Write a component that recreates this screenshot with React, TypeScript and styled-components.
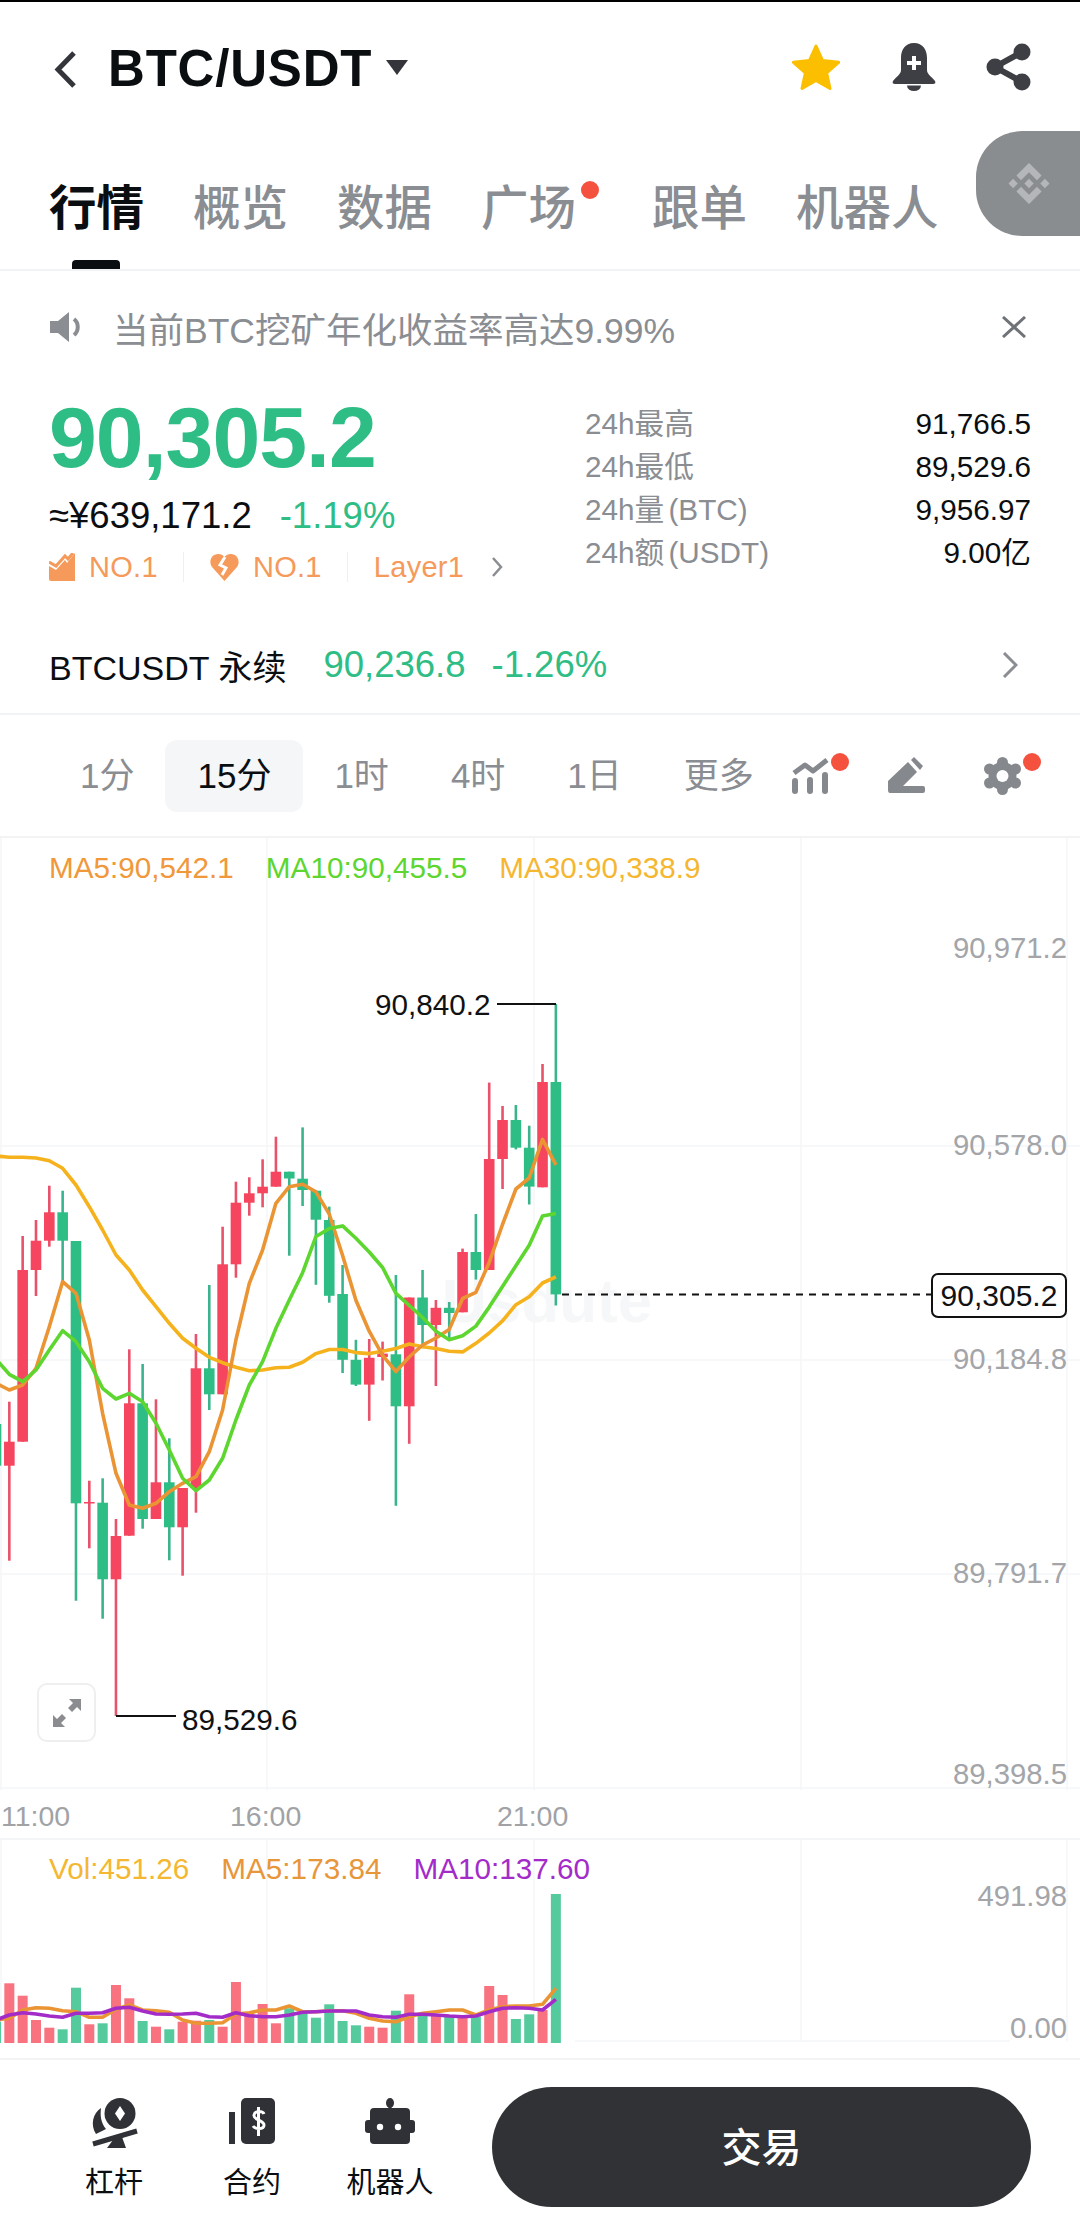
import styled, { createGlobalStyle } from 'styled-components';

const GRAY = '#8a8d92';
const RED = '#f5455f';
const GREEN = '#2ebd85';
const DOT = '#f4513f';

const GlobalStyle = createGlobalStyle`
  html, body {
    margin: 0;
    padding: 0;
    background: #fff;
  }
  body {
    font-family: 'Liberation Sans', 'Noto Sans CJK SC', sans-serif;
    color: #0b0e11;
  }
`;

// k, colour, high, body top, body bottom, low
type Candle = [number, 'r' | 'g', number, number, number, number];
const candles: Candle[] = [
  [-1, 'g', 1400, 1424, 1465.7, 1480],
  [0, 'r', 1401.7, 1441.7, 1465.7, 1560.7],
  [1, 'r', 1236, 1270, 1441.7, 1441.7],
  [2, 'r', 1220, 1240.7, 1270, 1296],
  [3, 'r', 1185.7, 1212.3, 1240.7, 1246.7],
  [4, 'g', 1190.7, 1212.3, 1240.7, 1281.7],
  [5, 'g', 1241, 1241, 1503.3, 1600.7],
  [6, 'r', 1480.7, 1502, 1503.5, 1548.3],
  [7, 'g', 1478.3, 1502.7, 1579.3, 1618.7],
  [8, 'r', 1519, 1536, 1579.3, 1716],
  [9, 'r', 1349.3, 1403.3, 1535.7, 1535.7],
  [10, 'g', 1364, 1403.3, 1519, 1528.7],
  [11, 'r', 1399.3, 1482.3, 1519, 1519],
  [12, 'g', 1438.3, 1482.3, 1527.3, 1560.3],
  [13, 'r', 1488, 1488, 1527.3, 1575.7],
  [14, 'r', 1334, 1368.3, 1488, 1512.7],
  [15, 'g', 1285, 1368.3, 1394.3, 1410],
  [16, 'r', 1226.7, 1264.3, 1394.3, 1394.3],
  [17, 'r', 1181.7, 1202.7, 1264.3, 1277.7],
  [18, 'r', 1177.3, 1193.3, 1202.7, 1215.7],
  [19, 'r', 1159.3, 1186.7, 1193.3, 1207.3],
  [20, 'r', 1136.7, 1171.7, 1186.7, 1186.7],
  [21, 'g', 1171.7, 1171.7, 1178.5, 1255.7],
  [22, 'g', 1127.4, 1178.7, 1190, 1206],
  [23, 'g', 1190.7, 1190.7, 1219.7, 1284.8],
  [24, 'g', 1206.6, 1220, 1295.8, 1302.7],
  [25, 'g', 1265, 1294, 1359.8, 1373],
  [26, 'g', 1339.8, 1359.8, 1384.6, 1386],
  [27, 'r', 1339, 1357.8, 1384.6, 1420.8],
  [28, 'r', 1341.6, 1353.6, 1357, 1380.5],
  [29, 'g', 1275, 1354.3, 1406.3, 1505.8],
  [30, 'r', 1297.5, 1297.5, 1406.3, 1443.8],
  [31, 'g', 1270, 1297.5, 1325, 1345],
  [32, 'r', 1300, 1307.8, 1325, 1386],
  [33, 'g', 1302, 1307.8, 1313, 1338],
  [34, 'r', 1248.6, 1252, 1312.3, 1312.3],
  [35, 'g', 1214, 1252, 1270, 1279.6],
  [36, 'r', 1082.6, 1159, 1270, 1270],
  [37, 'r', 1106, 1120, 1159, 1189],
  [38, 'g', 1105, 1120, 1147.7, 1149.4],
  [39, 'g', 1125.7, 1147.7, 1186.6, 1204.5],
  [40, 'r', 1064, 1082, 1187.3, 1187.3],
  [41, 'g', 1004, 1082, 1294.4, 1305.4],
];

const ma5 = [1383.3, 1390, 1385, 1368.3, 1326.7, 1281.7, 1293.3, 1340, 1413.3, 1473.3, 1505, 1508.3, 1503.3, 1491.7, 1483.3, 1476.7, 1451.7, 1410, 1340, 1283.3, 1250, 1203.3, 1186.7, 1184.2, 1191.8, 1214.2, 1255.5, 1300.2, 1331.2, 1355.3, 1371.5, 1357, 1345, 1338.1, 1329.5, 1298.5, 1292.3, 1262.4, 1224.5, 1189, 1178, 1139.4, 1164.9];
const ma10 = [1359.3, 1374.3, 1381.7, 1370, 1350, 1330.7, 1341.7, 1361.7, 1388.3, 1399, 1393.3, 1401.7, 1423.3, 1450, 1478.3, 1490.7, 1480, 1458.3, 1420, 1385, 1361.7, 1328.3, 1300, 1272.7, 1236.5, 1228.6, 1225.9, 1238.3, 1252, 1267.5, 1293.4, 1305.4, 1317.5, 1331.2, 1339.8, 1335.7, 1326.1, 1307.1, 1286.5, 1265.8, 1245.2, 1215.9, 1213.5];
const ma30 = [1156, 1157.3, 1157.3, 1158, 1160.7, 1168.3, 1185, 1206.7, 1230, 1255, 1270, 1290, 1306.7, 1323.3, 1338.3, 1348.3, 1357.3, 1362.7, 1367.3, 1370.7, 1370, 1367.7, 1367.2, 1362.2, 1353.6, 1349.5, 1349.5, 1352.6, 1353.6, 1351.2, 1348.5, 1344, 1346.7, 1348.5, 1351.2, 1351.9, 1343.3, 1333, 1320.9, 1304.7, 1296.8, 1283, 1276.8];

// volume bar tops, from k = -1
const volTops = [2021.7, 1983.3, 1995.7, 2020, 2027.7, 2029.3, 1987.7, 2024.3, 2023.3, 1985, 1998.3, 2021, 2026.7, 2029.3, 2021.7, 2020.7, 2020, 2026.7, 1982, 2013.3, 2004, 2023.3, 2008.3, 2013.3, 2017.7, 2004.3, 2021, 2025.3, 2026.7, 2027.7, 2010.7, 1994.3, 2015, 2015, 2016.7, 2016.7, 2016.7, 1986, 1995, 2019, 2014.3, 2010, 1894];
const volMa5 = [180, 175, 150, 143, 145, 152, 155, 172, 172, 148, 135, 150, 152, 157, 180, 190, 190, 188, 162, 158, 150, 150, 138, 155, 155, 152, 152, 160, 175, 183, 185, 170, 160, 155, 150, 150, 165, 150, 140, 138, 138, 133, 85];
const volMa10 = [180, 165, 158, 162, 168, 172, 160, 160, 158, 145, 142, 153, 162, 163, 162, 160, 170, 172, 158, 167, 170, 170, 165, 157, 155, 153, 153, 153, 165, 170, 172, 163, 163, 165, 168, 170, 168, 155, 145, 143, 145, 150, 118];

const xOf = (k: number) => 9.33 + k * 13.33;
const linePoints = (ys: number[]) =>
  ys.map((y, i) => `${xOf(i - 1).toFixed(1)},${y}`).join(' ');
const volPoints = (vs: number[]) =>
  vs.map((v, i) => `${xOf(i - 1).toFixed(1)},${(1960 + v / 3).toFixed(1)}`).join(' ');

const tabs = ['行情', '概览', '数据', '广场', '跟单', '机器人'];
const intervals = ['1分', '15分', '1时', '4时', '1日', '更多'];
const stats = [
  ['24h最高', '91,766.5'],
  ['24h最低', '89,529.6'],
  ['24h量 (BTC)', '9,956.97'],
  ['24h额 (USDT)', '9.00亿'],
];
const axisLabels: [number, string][] = [
  [950, '90,971.2'],
  [1147, '90,578.0'],
  [1361, '90,184.8'],
  [1575, '89,791.7'],
  [1776, '89,398.5'],
];

const App = () => {
  return (
    <Page>
      <GlobalStyle />
      <TopLine />
      <Header>
        <TitleGroup>
          <svg width="23" height="39" viewBox="0 0 23 39">
            <path d="M20 3L4 19.5 20 36" fill="none" stroke="#33353a" strokeWidth="5" />
          </svg>
          <Title>BTC/USDT</Title>
          <svg width="22" height="15" viewBox="0 0 22 15">
            <path d="M0 0h22L11 15z" fill="#33353a" />
          </svg>
        </TitleGroup>
        <HeaderIcons>
          <svg width="52" height="48" viewBox="0 0 52 48">
            <path
              d="M26 3l6.6 14.6 16 1.7-12 10.600 3.400 15.600L26 37.400l-14 8.100 3.400-15.600-12-10.600 16-1.700z"
              fill="#fcbf00"
              stroke="#fcbf00"
              strokeWidth="3"
              strokeLinejoin="round"
            />
          </svg>
          <svg width="46" height="48" viewBox="0 0 46 48">
            <path
              d="M23 0C14 0 10 7 10 15v12c0 4-4 6-8 11-1 2 0 3 2 3h38c2 0 3-1 2-3-4-5-8-7-8-11V15C36 7 32 0 23 0z"
              fill="#3d3f44"
            />
            <path d="M16 42.500a7 5.500 0 0 0 14 0z" fill="#3d3f44" />
            <path d="M21 13h4v5h5v4h-5v5h-4v-5h-5v-4h5z" fill="#fff" />
          </svg>
          <svg width="46" height="48" viewBox="0 0 46 48">
            <path d="M36 9L9 24l27 15" fill="none" stroke="#3d3f44" strokeWidth="6" />
            <circle cx="36" cy="9" r="8.500" fill="#3d3f44" />
            <circle cx="9" cy="24" r="8.500" fill="#3d3f44" />
            <circle cx="36" cy="39" r="8.500" fill="#3d3f44" />
          </svg>
        </HeaderIcons>
      </Header>

      <TabsRow>
        {tabs.map((t, i) => (
          <Tab key={t} $active={i === 0} $dot={t === '广场'}>
            {t}
          </Tab>
        ))}
        <FloatingTab>
          <svg width="42" height="41" viewBox="0 0 126.61 126.61">
            <path
              d="M38.73 53.2l24.59-24.58 24.6 24.6 14.3-14.31L63.32 0 24.42 38.9 38.73 53.2zM0 63.31l14.3-14.31 14.31 14.31-14.31 14.3zM38.73 73.41L63.32 98l24.6-24.6 14.31 14.29L63.32 126.61 24.41 87.7l-.02-.02zM98 63.31l14.3-14.31 14.31 14.3-14.31 14.32zM77.83 63.3L63.32 48.78 52.59 59.51l-1.24 1.23-2.54 2.54 14.51 14.5 14.51-14.47z"
              fill="#b4b6b9"
            />
          </svg>
        </FloatingTab>
      </TabsRow>

      <Notice>
        <NoticeText>
          <svg width="36" height="32" viewBox="0 0 36 32">
            <path d="M0 10h8L19 1v30L8 22H0z" fill={GRAY} />
            <path d="M24 8c5 4 5 12 0 16" fill="none" stroke={GRAY} strokeWidth="4" />
          </svg>
          当前BTC挖矿年化收益率高达9.99%
        </NoticeText>
        <svg width="24" height="22" viewBox="0 0 24 22">
          <path d="M1 1l22 20M23 1L1 21" stroke="#6f7378" strokeWidth="3" />
        </svg>
      </Notice>

      <Quote>
        <QuoteLeft>
          <BigPrice>90,305.2</BigPrice>
          <SubPrice>
            <span>≈¥639,171.2</span>
            <GreenText>-1.19%</GreenText>
          </SubPrice>
          <TagRow>
            <Tag>
              <svg width="26" height="28" viewBox="0 0 26 28">
                <path d="M0 13l7 4 9-10 2 3 8-10v28H2q-2 0-2-2z" fill="#f59a5a" />
                <path d="M0 9l7 4 9-10 3 3 5-6" fill="none" stroke="#f59a5a" strokeWidth="3" />
              </svg>
              NO.1
            </Tag>
            <Tag $divided>
              <svg width="29" height="29" viewBox="0 0 29 29">
                <path
                  d="M14.500 28L2 14C-2 8 2 1 8 1c3 0 5 1 6.500 3C16 2 18 1 21 1c6 0 10 7 6 13z"
                  fill="#f59a5a"
                />
                <path d="M15 4l-5 8 6 3-4 7" fill="none" stroke="#fff" strokeWidth="3" />
              </svg>
              NO.1
            </Tag>
            <Tag $divided>
              Layer1
              <TagChevron width="12" height="20" viewBox="0 0 12 20">
                <path d="M2 1l8 9-8 9" fill="none" stroke={GRAY} strokeWidth="2.500" />
              </TagChevron>
            </Tag>
          </TagRow>
        </QuoteLeft>
        <StatList>
          {stats.map(([label, value]) => (
            <StatRow key={label}>
              <StatLabel>{label}</StatLabel>
              <StatValue>{value}</StatValue>
            </StatRow>
          ))}
        </StatList>
      </Quote>

      <ContractRow>
        <ContractInfo>
          <ContractName>BTCUSDT 永续</ContractName>
          <GreenText>90,236.8</GreenText>
          <GreenText>-1.26%</GreenText>
        </ContractInfo>
        <svg width="16" height="26" viewBox="0 0 16 26">
          <path d="M2 1l12 12L2 25" fill="none" stroke={GRAY} strokeWidth="3" />
        </svg>
      </ContractRow>

      <IntervalRow>
        {intervals.map((t) => (
          <Interval key={t} $active={t === '15分'}>
            {t}
          </Interval>
        ))}
        <ToolIcons>
          <ToolIcon $dot>
            <svg width="37" height="37" viewBox="0 0 37 37">
              <path d="M2 16l11-8 8 6L35 3" fill="none" stroke="#85888d" strokeWidth="5" strokeLinejoin="round" />
              <path d="M3 24v10M18 23v11M33 18v16" stroke="#85888d" strokeWidth="6" strokeLinecap="round" />
            </svg>
          </ToolIcon>
          <ToolIcon>
            <svg width="37" height="36" viewBox="0 0 37 36">
              <path d="M0 33V24L20 5l9 10-14 14h20q2 0 2 2v3q0 2-2 2H2q-2 0-2-3z" fill="#85888d" />
              <path d="M23 3l3-3 9 9-3 4z" fill="#85888d" />
            </svg>
          </ToolIcon>
          <ToolIcon $dot>
            <svg width="37" height="38" viewBox="0 0 37 38">
              <circle cx="18.500" cy="19" r="14" fill="#85888d" />
              <circle cx="18.500" cy="5.500" r="5.500" fill="#85888d" />
              <circle cx="18.500" cy="32.500" r="5.500" fill="#85888d" />
              <circle cx="5.500" cy="12" r="5.500" fill="#85888d" />
              <circle cx="31.500" cy="12" r="5.500" fill="#85888d" />
              <circle cx="5.500" cy="26" r="5.500" fill="#85888d" />
              <circle cx="31.500" cy="26" r="5.500" fill="#85888d" />
              <circle cx="18.500" cy="19" r="6" fill="#fff" />
            </svg>
          </ToolIcon>
        </ToolIcons>
      </IntervalRow>

      <ChartPane>
        <svg width="1080" height="1000" viewBox="0 838 1080 1000">
          {[1, 267, 534, 801, 1067].map((x) => (
            <GridLine key={x} x1={x} x2={x} y1="838" y2="1790" />
          ))}
          {[1146, 1360, 1574, 1788].map((y) => (
            <GridLine key={y} x1="0" x2="1080" y1={y} y2={y} />
          ))}
          <Watermark x="442" y="1322">
            Usdute
          </Watermark>
          {candles.map(([k, c, high, top, bottom, low]) => (
            <g key={k}>
              <Wick x1={xOf(k)} x2={xOf(k)} y1={high} y2={low} $up={c === 'r'} />
              <Body x={xOf(k) - 5.3} y={top} width="10.600" height={bottom - top} $up={c === 'r'} />
            </g>
          ))}
          <MaLine points={linePoints(ma30)} stroke="#f5b21c" />
          <MaLine points={linePoints(ma5)} stroke="#ea9434" />
          <MaLine points={linePoints(ma10)} stroke="#5dd62f" />
          <Leader points="497,1004 556,1004" />
          <Leader points="116,1716 176,1716" />
          <ExtremeLabel x="375" y="1007">
            90,840.2
          </ExtremeLabel>
          <ExtremeLabel x="182" y="1722">
            89,529.6
          </ExtremeLabel>
          <line x1="562" x2="931" y1="1294.500" y2="1294.500" stroke="#111" strokeWidth="2" strokeDasharray="7 6" />
          {axisLabels.map(([y, label]) => (
            <AxisLabel key={label} x="1067" y={y}>
              {label}
            </AxisLabel>
          ))}
          <TimeLabel x="1" y="1818">
            11:00
          </TimeLabel>
          <TimeLabel x="230" y="1818">
            16:00
          </TimeLabel>
          <TimeLabel x="497" y="1818">
            21:00
          </TimeLabel>
        </svg>
        <Legend>
          <LegendItem $color="#f0983a">MA5:90,542.1</LegendItem>
          <LegendItem $color="#5dd62f">MA10:90,455.5</LegendItem>
          <LegendItem $color="#f5b731">MA30:90,338.9</LegendItem>
        </Legend>
        <PriceTag>90,305.2</PriceTag>
        <ExpandButton>
          <svg width="30" height="30" viewBox="0 0 30 30">
            <path d="M17 1h12v12l-4-4-5 5-4-4 5-5zM13 29H1V17l4 4 5-5 4 4-5 5z" fill="#8a8c90" />
          </svg>
        </ExpandButton>
      </ChartPane>

      <VolumePane>
        <svg width="1080" height="218" viewBox="0 1840 1080 218">
          {[1, 267, 534, 801, 1067].map((x) => (
            <GridLine key={x} x1={x} x2={x} y1="1840" y2="2041" />
          ))}
          <GridLine x1="575" x2="1010" y1="2041" y2="2041" />
          {volTops.map((top, i) => (
            <VolBar
              key={i}
              x={xOf(i - 1) - 5}
              y={top}
              width="10"
              height={2043 - top}
              $up={candles[i][1] === 'r'}
            />
          ))}
          <VolLine points={volPoints(volMa5)} stroke="#ea9434" />
          <VolLine points={volPoints(volMa10)} stroke="#a32cc9" />
          <AxisLabel x="1067" y="1898">
            491.98
          </AxisLabel>
          <AxisLabel x="1067" y="2030">
            0.00
          </AxisLabel>
        </svg>
        <Legend $top={12}>
          <LegendItem $color="#f4b731">Vol:451.26</LegendItem>
          <LegendItem $color="#e8963a">MA5:173.84</LegendItem>
          <LegendItem $color="#a32cc9">MA10:137.60</LegendItem>
        </Legend>
      </VolumePane>

      <BottomBar>
        <BottomTool>
          <ToolGlyph>
            <svg width="48" height="50" viewBox="0 0 48 50">
              <circle cx="30" cy="15.500" r="15.500" fill="#2f3136" />
              <path d="M30 8l5 7.500-5 7.500-5-7.500z" fill="#fff" />
              <path d="M11 10C3 15 0 27 6 36l10-5c-5-6-6-13-5-21z" fill="#2f3136" />
              <path d="M3 46l44-13" stroke="#2f3136" strokeWidth="5" />
              <path d="M23 42l9-3 4 11H17z" fill="#2f3136" />
            </svg>
          </ToolGlyph>
          杠杆
        </BottomTool>
        <BottomTool>
          <ToolGlyph>
            <svg width="46" height="46" viewBox="0 0 46 46">
              <rect x="12" y="0" width="34" height="46" rx="5" fill="#2f3136" />
              <rect x="0" y="14" width="6" height="32" fill="#2f3136" />
              <path
                d="M35 16c-1-3-9-4-10 1s10 5 10 10-9 4-11 1M29.500 9v29"
                fill="none"
                stroke="#fff"
                strokeWidth="3"
              />
            </svg>
          </ToolGlyph>
          合约
        </BottomTool>
        <BottomTool>
          <ToolGlyph>
            <svg width="50" height="46" viewBox="0 0 50 46">
              <ellipse cx="25" cy="5" rx="4" ry="5" fill="#2f3136" />
              <rect x="23.500" y="6" width="3" height="6" fill="#2f3136" />
              <rect x="5" y="10" width="40" height="36" rx="4" fill="#2f3136" />
              <rect x="0" y="22" width="50" height="13" rx="3" fill="#2f3136" />
              <circle cx="15" cy="29" r="3.200" fill="#fff" />
              <circle cx="33" cy="29" r="3.200" fill="#fff" />
            </svg>
          </ToolGlyph>
          机器人
        </BottomTool>
        <TradeButton>交易</TradeButton>
      </BottomBar>
    </Page>
  );
};

const Page = styled.div`
  width: 1080px;
  height: 2237px;
  overflow: hidden;
  background: #fff;
`;
const TopLine = styled.div`
  height: 2px;
  background: #000;
`;
const Header = styled.header`
  height: 134px;
  display: flex;
  align-items: center;
  justify-content: space-between;
  padding: 0 48px 0 54px;
`;
const TitleGroup = styled.div`
  display: flex;
  align-items: center;
  gap: 14px;
  & > svg:last-child {
    margin-top: -4px;
  }
`;
const Title = styled.h1`
  margin: 0 0 0 17px;
  font-size: 51px;
  line-height: 60px;
  font-weight: 700;
  color: #0b0e11;
  letter-spacing: 0.8px;
`;
const HeaderIcons = styled.div`
  display: flex;
  align-items: center;
  gap: 49px;
  margin-top: -4px;
`;
const TabsRow = styled.nav`
  position: relative;
  height: 133px;
  display: flex;
  gap: 49px;
  padding-left: 49px;
  border-bottom: 2px solid #f2f3f5;
`;
const Tab = styled.div<{ $active?: boolean; $dot?: boolean }>`
  position: relative;
  height: 133px;
  box-sizing: border-box;
  padding-top: 50px;
  font-size: 47.5px;
  line-height: 46px;
  font-weight: ${(p) => (p.$active ? 700 : 500)};
  color: ${(p) => (p.$active ? '#0b0e11' : GRAY)};
  margin-right: ${(p) => (p.$dot ? '27px' : 0)};
  &::before {
    content: '';
    display: ${(p) => (p.$dot ? 'block' : 'none')};
    position: absolute;
    top: 45px;
    right: -23px;
    width: 18px;
    height: 18px;
    border-radius: 50%;
    background: ${DOT};
  }
  &::after {
    content: '';
    display: ${(p) => (p.$active ? 'block' : 'none')};
    position: absolute;
    left: 23px;
    bottom: 0;
    width: 48px;
    height: 9px;
    border-radius: 4px 4px 0 0;
    background: #0b0e11;
  }
`;
const FloatingTab = styled.div`
  position: absolute;
  top: -5px;
  right: 0;
  width: 104px;
  height: 105px;
  display: flex;
  align-items: center;
  padding-left: 32px;
  box-sizing: border-box;
  background: #8a8d90;
  border-radius: 46px 0 0 46px;
`;
const Notice = styled.div`
  height: 112px;
  display: flex;
  align-items: center;
  justify-content: space-between;
  padding: 0 54px 0 50px;
`;
const NoticeText = styled.div`
  display: flex;
  align-items: center;
  gap: 27px;
  font-size: 35.5px;
  color: ${GRAY};
`;
const Quote = styled.section`
  height: 236px;
  box-sizing: border-box;
  display: flex;
  padding: 12px 49px 0 49px;
`;
const QuoteLeft = styled.div`
  width: 536px;
  flex: none;
`;
const BigPrice = styled.div`
  font-size: 86px;
  line-height: 84px;
  font-weight: 700;
  letter-spacing: -1px;
  color: ${GREEN};
`;
const SubPrice = styled.div`
  display: flex;
  gap: 28px;
  margin-top: 17px;
  font-size: 36.5px;
  line-height: 40px;
  color: #0b0e11;
`;
const GreenText = styled.span`
  font-size: 36.5px;
  color: ${GREEN};
`;
const TagRow = styled.div`
  display: flex;
  align-items: center;
  margin-top: 16px;
  height: 30px;
`;
const Tag = styled.div<{ $divided?: boolean }>`
  display: flex;
  align-items: center;
  gap: 14px;
  height: 30px;
  font-size: 29px;
  letter-spacing: 0.3px;
  color: #f59a5a;
  padding-right: 25px;
  ${(p) => (p.$divided ? 'border-left: 1px solid #eeeff1; padding-left: 26px;' : '')}
`;
const TagChevron = styled.svg`
  margin-left: 13px;
`;
const StatList = styled.div`
  flex: 1;
  padding-top: 7px;
`;
const StatRow = styled.div`
  display: flex;
  justify-content: space-between;
  height: 43px;
  line-height: 43px;
  font-size: 29.7px;
`;
const StatLabel = styled.span`
  color: ${GRAY};
  word-spacing: -4px;
`;
const StatValue = styled.span`
  color: #0b0e11;
`;
const ContractRow = styled.div`
  height: 94px;
  box-sizing: border-box;
  display: flex;
  align-items: center;
  justify-content: space-between;
  padding: 0 62px 2px 49px;
`;
const ContractInfo = styled.div`
  display: flex;
  align-items: center;
  gap: 26px;
`;
const ContractName = styled.span`
  font-size: 34px;
  color: #0b0e11;
  margin-right: 11px;
`;
const IntervalRow = styled.div`
  height: 121px;
  display: flex;
  align-items: center;
  padding-left: 49px;
  border-top: 2px solid #f2f3f5;
  border-bottom: 2px solid #f2f3f5;
`;
const Interval = styled.div<{ $active?: boolean }>`
  height: 72px;
  line-height: 72px;
  padding: 0 ${(p) => (p.$active ? 32 : 31)}px;
  font-size: 35px;
  border-radius: 12px;
  color: ${(p) => (p.$active ? '#0b0e11' : GRAY)};
  background: ${(p) => (p.$active ? '#f4f6f8' : 'transparent')};
`;
const ToolIcons = styled.div`
  display: flex;
  align-items: center;
  gap: 59px;
  margin-left: 7px;
`;
const ToolIcon = styled.div<{ $dot?: boolean }>`
  position: relative;
  width: 37px;
  height: 38px;
  &::after {
    content: '';
    display: ${(p) => (p.$dot ? 'block' : 'none')};
    position: absolute;
    top: -4px;
    left: 39px;
    width: 18px;
    height: 18px;
    border-radius: 50%;
    background: ${DOT};
  }
`;
const ChartPane = styled.div`
  position: relative;
  height: 1000px;
  border-bottom: 2px solid #f4f5f6;
  & > svg {
    display: block;
  }
`;
const GridLine = styled.line`
  stroke: #f5f6f7;
  stroke-width: 1.5;
`;
const Watermark = styled.text`
  font-size: 62px;
  font-weight: 700;
  fill: #f6f7f8;
`;
const Wick = styled.line<{ $up: boolean }>`
  stroke: ${(p) => (p.$up ? '#e8526a' : '#3bb48d')};
  stroke-width: 2.6;
`;
const Body = styled.rect<{ $up: boolean }>`
  fill: ${(p) => (p.$up ? RED : GREEN)};
`;
const MaLine = styled.polyline`
  fill: none;
  stroke-width: 3.6;
  stroke-linejoin: round;
`;
const VolLine = styled.polyline`
  fill: none;
  stroke-width: 3.6;
  stroke-linejoin: round;
`;
const VolBar = styled.rect<{ $up: boolean }>`
  fill: ${(p) => (p.$up ? '#f8727f' : '#55cb9d')};
`;
const Leader = styled.polyline`
  fill: none;
  stroke: #111;
  stroke-width: 2;
`;
const ExtremeLabel = styled.text`
  font-size: 29.7px;
  fill: #111;
  dominant-baseline: middle;
`;
const AxisLabel = styled.text`
  font-size: 29.3px;
  fill: #a3a5a9;
  text-anchor: end;
  dominant-baseline: middle;
`;
const TimeLabel = styled.text`
  font-size: 28.5px;
  fill: #a0a2a6;
  dominant-baseline: middle;
`;
const Legend = styled.div<{ $top?: number }>`
  position: absolute;
  top: ${(p) => p.$top ?? 13}px;
  left: 49px;
  display: flex;
  gap: 32px;
  font-size: 29.7px;
  line-height: 34px;
`;
const LegendItem = styled.span<{ $color: string }>`
  color: ${(p) => p.$color};
`;
const PriceTag = styled.div`
  position: absolute;
  top: 435px;
  left: 931px;
  width: 136px;
  height: 45px;
  box-sizing: border-box;
  border: 2px solid #111;
  border-radius: 7px;
  background: #fff;
  font-size: 30px;
  line-height: 41px;
  text-align: center;
  color: #111;
`;
const ExpandButton = styled.div`
  position: absolute;
  top: 845px;
  left: 37px;
  width: 59px;
  height: 59px;
  box-sizing: border-box;
  border: 2px solid #efefef;
  border-radius: 10px;
  background: #fff;
  display: flex;
  align-items: center;
  justify-content: center;
`;
const VolumePane = styled.div`
  position: relative;
  height: 218px;
  border-bottom: 2px solid #f2f3f5;
  & > svg {
    display: block;
  }
`;
const BottomBar = styled.footer`
  height: 177px;
  box-sizing: border-box;
  display: flex;
  align-items: flex-start;
  padding: 27px 0 0 45px;
`;
const BottomTool = styled.div`
  width: 138px;
  padding-top: 11px;
  display: flex;
  flex-direction: column;
  align-items: center;
  font-size: 29px;
  line-height: 34px;
  color: #0b0e11;
`;
const ToolGlyph = styled.div`
  height: 52px;
  margin-bottom: 16px;
`;
const TradeButton = styled.button`
  width: 539px;
  height: 120px;
  margin-left: 33px;
  padding: 0 0 5px;
  border: 0;
  border-radius: 60px;
  background: #303236;
  color: #fff;
  font-family: inherit;
  font-size: 40px;
  font-weight: 500;
`;

export default App;
